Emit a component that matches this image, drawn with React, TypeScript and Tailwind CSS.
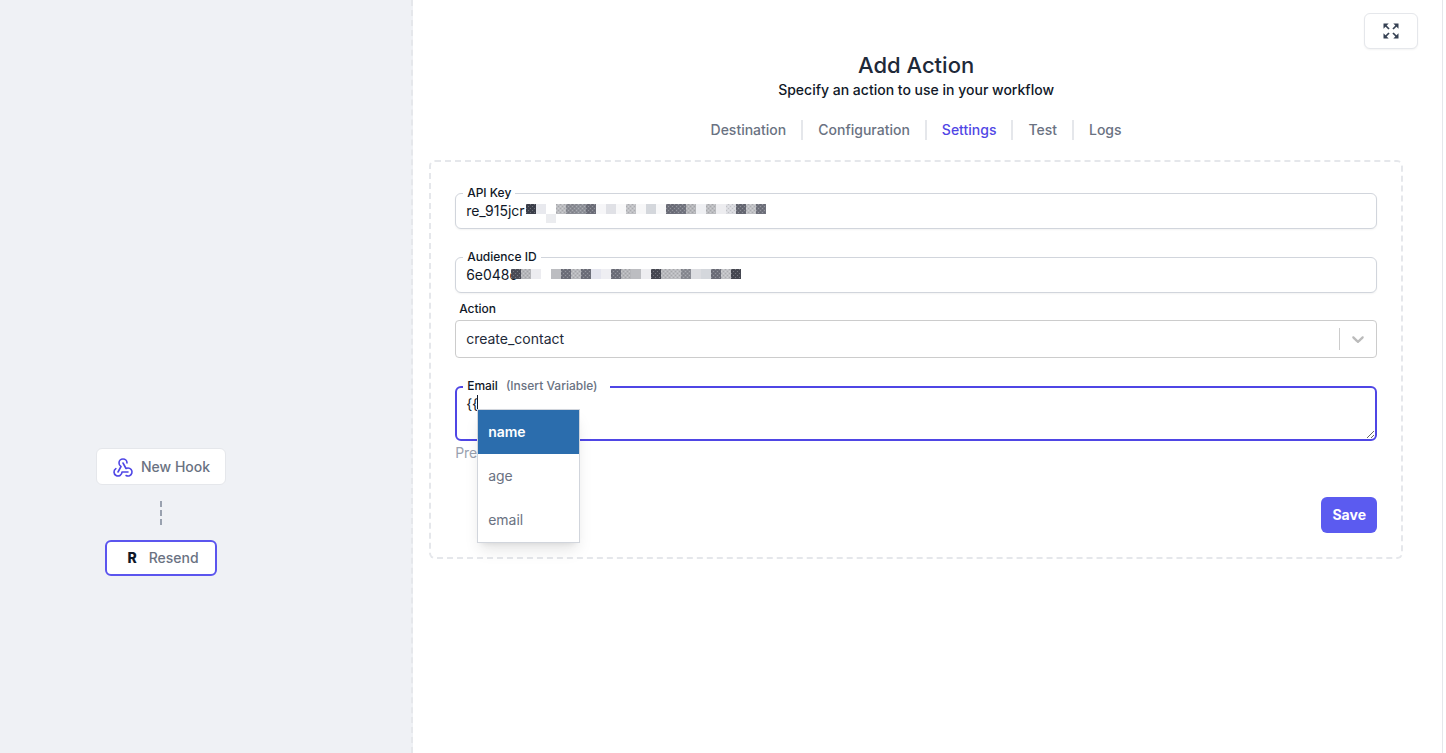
import { useState } from "react";
import { TbWebhook } from "react-icons/tb";
import clsx from "clsx";

const tabs = ["Destination", "Configuration", "Settings", "Test", "Logs"];
const variables = ["name", "age", "email"];

// Shades of the blocks that hide the secret part of a value
const apiKeyMask = [
  "#3b3e4a", "#e8e9ee", "", "#bbbcc0", "#8a8c94", "#8f929a", "#6d6f7a",
  "#f6f6f8", "#e0e1e6", "#f8f8f9", "#c0c1c5", "#f7f7f8", "#d4d7dc", "#f8f8f9",
  "#6d6f7a", "#737580", "#b5b6ba", "#eff0f3", "#bbbcc0", "#ededf0", "#d9dadf",
  "#666873", "#c0c1c5", "#70727d",
];
const audienceMask = [
  "#4a4c57", "#b5b6ba", "#ececf0", "", "#bcbdc1", "#6d6f7a", "#b8b9bd",
  "#6d6f7a", "#e4e5ee", "#eeeef2", "#6d6f7a", "#b5b6ba", "#bcbdc1", "#ededf0",
  "#454751", "#b8b9bd", "#bbbcc0", "#8a8c94", "#dcdde1", "#d4d7dc", "#6d6f7a",
  "#c0c1c5", "#454751",
];

// Blocks light enough to stay flat, without the dotted grain
const flat = ["#e8e9ee", "#f6f6f8", "#e0e1e6", "#f8f8f9", "#f7f7f8", "#d4d7dc",
  "#eff0f3", "#ededf0", "#ececf0", "#e4e5ee", "#eeeef2", "#dcdde1", "#bcbdc1"];

function Mask({ cells, className }: { cells: string[]; className: string }) {
  return (
    <svg
      width={240}
      height={20}
      aria-hidden="true"
      shapeRendering="crispEdges"
      className={clsx("pointer-events-none absolute", className)}
    >
      <defs>
        <pattern id="grain" width="4" height="4" patternUnits="userSpaceOnUse">
          <path d="M0 0h1v1H0zM2 2h1v1H2z" fill="#fff" fillOpacity="0.25" />
          <path d="M2 0h1v1H2zM0 2h1v1H0z" fill="#333" fillOpacity="0.15" />
        </pattern>
      </defs>
      {cells.map((fill, i) =>
        fill ? (
          <g key={i}>
            <rect x={i * 10} width={10} height={10} fill={fill} />
            {!flat.includes(fill) && (
              <rect x={i * 10} width={10} height={10} fill="url(#grain)" />
            )}
          </g>
        ) : null,
      )}
      {cells === apiKeyMask && (
        <rect x={20} y={10} width={10} height={9} fill="#ebecef" />
      )}
    </svg>
  );
}

function ExpandIcon() {
  return (
    <svg width="16" height="16" viewBox="0 0 16 16" aria-hidden="true">
      {[0, 90, 180, 270].map((angle) => (
        <g key={angle} transform={`rotate(${angle} 8 8)`}>
          <path d="M0.5 0.5h5.2L0.5 5.7z" fill="currentColor" />
          <path d="M2 2l4 4" stroke="currentColor" strokeWidth="1.7" />
        </g>
      ))}
    </svg>
  );
}

interface FieldProps {
  id: string;
  label: string;
  value: string;
  mask: string[];
  maskClass: string;
}

function SecretField({ id, label, value, mask, maskClass }: FieldProps) {
  return (
    <div className="relative">
      <label
        htmlFor={id}
        className="absolute -top-2 left-2 bg-white px-1 text-xs leading-4 font-medium text-gray-900"
      >
        {label}
      </label>
      <input
        id={id}
        type="text"
        defaultValue={value}
        className="block h-9 w-full rounded-md border border-gray-300 bg-white px-[10px] pb-[2px] text-sm text-gray-900 shadow-xs outline-none"
      />
      <Mask cells={mask} className={maskClass} />
    </div>
  );
}

export default function App() {
  const [tab, setTab] = useState("Settings");
  const [selected, setSelected] = useState("name");

  return (
    <div className="flex min-h-screen bg-white font-['Inter',sans-serif] text-gray-900">
      <aside className="relative w-2/7 shrink-0 border-r-2 border-dashed border-gray-200 bg-[#eff1f5]">
        <div className="absolute top-[448px] left-24 flex flex-col items-center">
          <button
            type="button"
            className="flex h-[37px] items-center gap-[6px] rounded-md border border-gray-200 bg-white pr-[15px] pl-[14px] text-sm font-medium text-gray-500"
          >
            <TbWebhook className="size-6 stroke-[1.6] text-[#4f46e5]" />
            New Hook
          </button>
          <div className="mt-4 mb-[15px] h-6 border-l-2 border-dashed border-gray-400" />
          <button
            type="button"
            className="flex h-9 items-center gap-3 rounded-md border-2 border-[#5b55ee] bg-white pr-4 pl-5 text-sm font-medium text-gray-500"
          >
            <span className="font-extrabold text-gray-900">R</span>
            Resend
          </button>
        </div>
      </aside>

      <main className="relative mr-[3px] flex-1 border-r border-gray-200 pr-[39px] pl-4">
        <button
          type="button"
          aria-label="Expand"
          className="absolute top-[13px] right-6 flex h-9 w-[54px] items-center justify-center rounded-md border border-gray-200 bg-white text-gray-700 shadow-xs"
        >
          <ExpandIcon />
        </button>

        <header className="pt-[50px] text-center">
          <h1 className="text-[22px] leading-[30px] font-medium text-gray-800">
            Add Action
          </h1>
          <p className="text-sm leading-5 font-medium">
            Specify an action to use in your workflow
          </p>
        </header>

        <nav className="mt-5 flex justify-center divide-x-2 divide-gray-200">
          {tabs.map((name) => (
            <button
              key={name}
              type="button"
              onClick={() => setTab(name)}
              className={clsx(
                "px-[15px] text-sm leading-5 font-medium",
                name === tab ? "text-[#5046e5]" : "text-gray-500",
              )}
            >
              {name}
            </button>
          ))}
        </nav>

        <form
          className="mt-5 rounded-md border-2 border-dashed border-gray-200 px-6 pt-[31px] pb-6"
          onSubmit={(e) => e.preventDefault()}
        >
          <SecretField
            id="api-key"
            label="API Key"
            value="re_915jcr"
            mask={apiKeyMask}
            maskClass="top-[11px] left-[71px]"
          />
          <div className="mt-7">
            <SecretField
              id="audience-id"
              label="Audience ID"
              value="6e048c"
              mask={audienceMask}
              maskClass="top-3 left-14"
            />
          </div>

          <label
            htmlFor="action"
            className="mt-2 ml-1 block text-xs leading-4 font-medium"
          >
            Action
          </label>
          <div className="relative mt-[3px]">
            <select
              id="action"
              defaultValue="create_contact"
              className="block h-[38px] w-full appearance-none rounded border border-[#ccc] bg-white px-[10px] text-sm text-gray-800 outline-none"
            >
              <option>create_contact</option>
            </select>
            <div className="pointer-events-none absolute inset-y-2 right-0 flex w-[38px] items-center justify-center border-l border-[#ccc] pr-[2px]">
              <svg width="20" height="20" viewBox="0 0 20 20" fill="#bbb">
                <path d="M4.516 7.548c0.436-0.446 1.043-0.481 1.576 0l3.908 3.747 3.908-3.747c0.533-0.481 1.141-0.446 1.574 0 0.436 0.445 0.408 1.197 0 1.615-0.406 0.418-4.695 4.502-4.695 4.502-0.217 0.223-0.502 0.335-0.787 0.335s-0.57-0.112-0.789-0.335c0 0-4.287-4.084-4.695-4.502s-0.436-1.17 0-1.615z" />
              </svg>
            </div>
          </div>

          <div className="relative mt-7">
            <label
              htmlFor="email"
              className="absolute -top-2 left-2 bg-white pr-3 pl-1 text-xs leading-4 font-medium"
            >
              Email
              <span className="ml-2 text-gray-500">(Insert Variable)</span>
            </label>
            <textarea
              id="email"
              defaultValue="{{"
              className="block h-[55px] w-full resize-y rounded-md border-2 border-[#4f46e5] bg-white px-[9px] py-[6px] text-sm leading-5 text-gray-900 outline-none"
            />
            <span className="absolute top-[9px] left-[22px] h-4 w-px bg-gray-900" />
            <ul className="absolute top-[23px] left-[22px] z-10 w-[103px] border border-gray-300 bg-white text-sm shadow-lg">
              {variables.map((name) => (
                <li key={name}>
                  <button
                    type="button"
                    onClick={() => setSelected(name)}
                    className={clsx(
                      "block h-11 w-full px-[10px] text-left",
                      name === selected
                        ? "bg-[#2b6dad] font-semibold text-white"
                        : "text-gray-500",
                    )}
                  >
                    {name}
                  </button>
                </li>
              ))}
            </ul>
          </div>
          <p className="mt-[2px] text-sm leading-5 text-gray-400">Preview:</p>

          <div className="mt-[34px] flex justify-end">
            <button
              type="submit"
              className="h-9 rounded-md bg-[#5b5bf0] px-[11px] text-sm font-bold text-white"
            >
              Save
            </button>
          </div>
        </form>
      </main>
    </div>
  );
}
